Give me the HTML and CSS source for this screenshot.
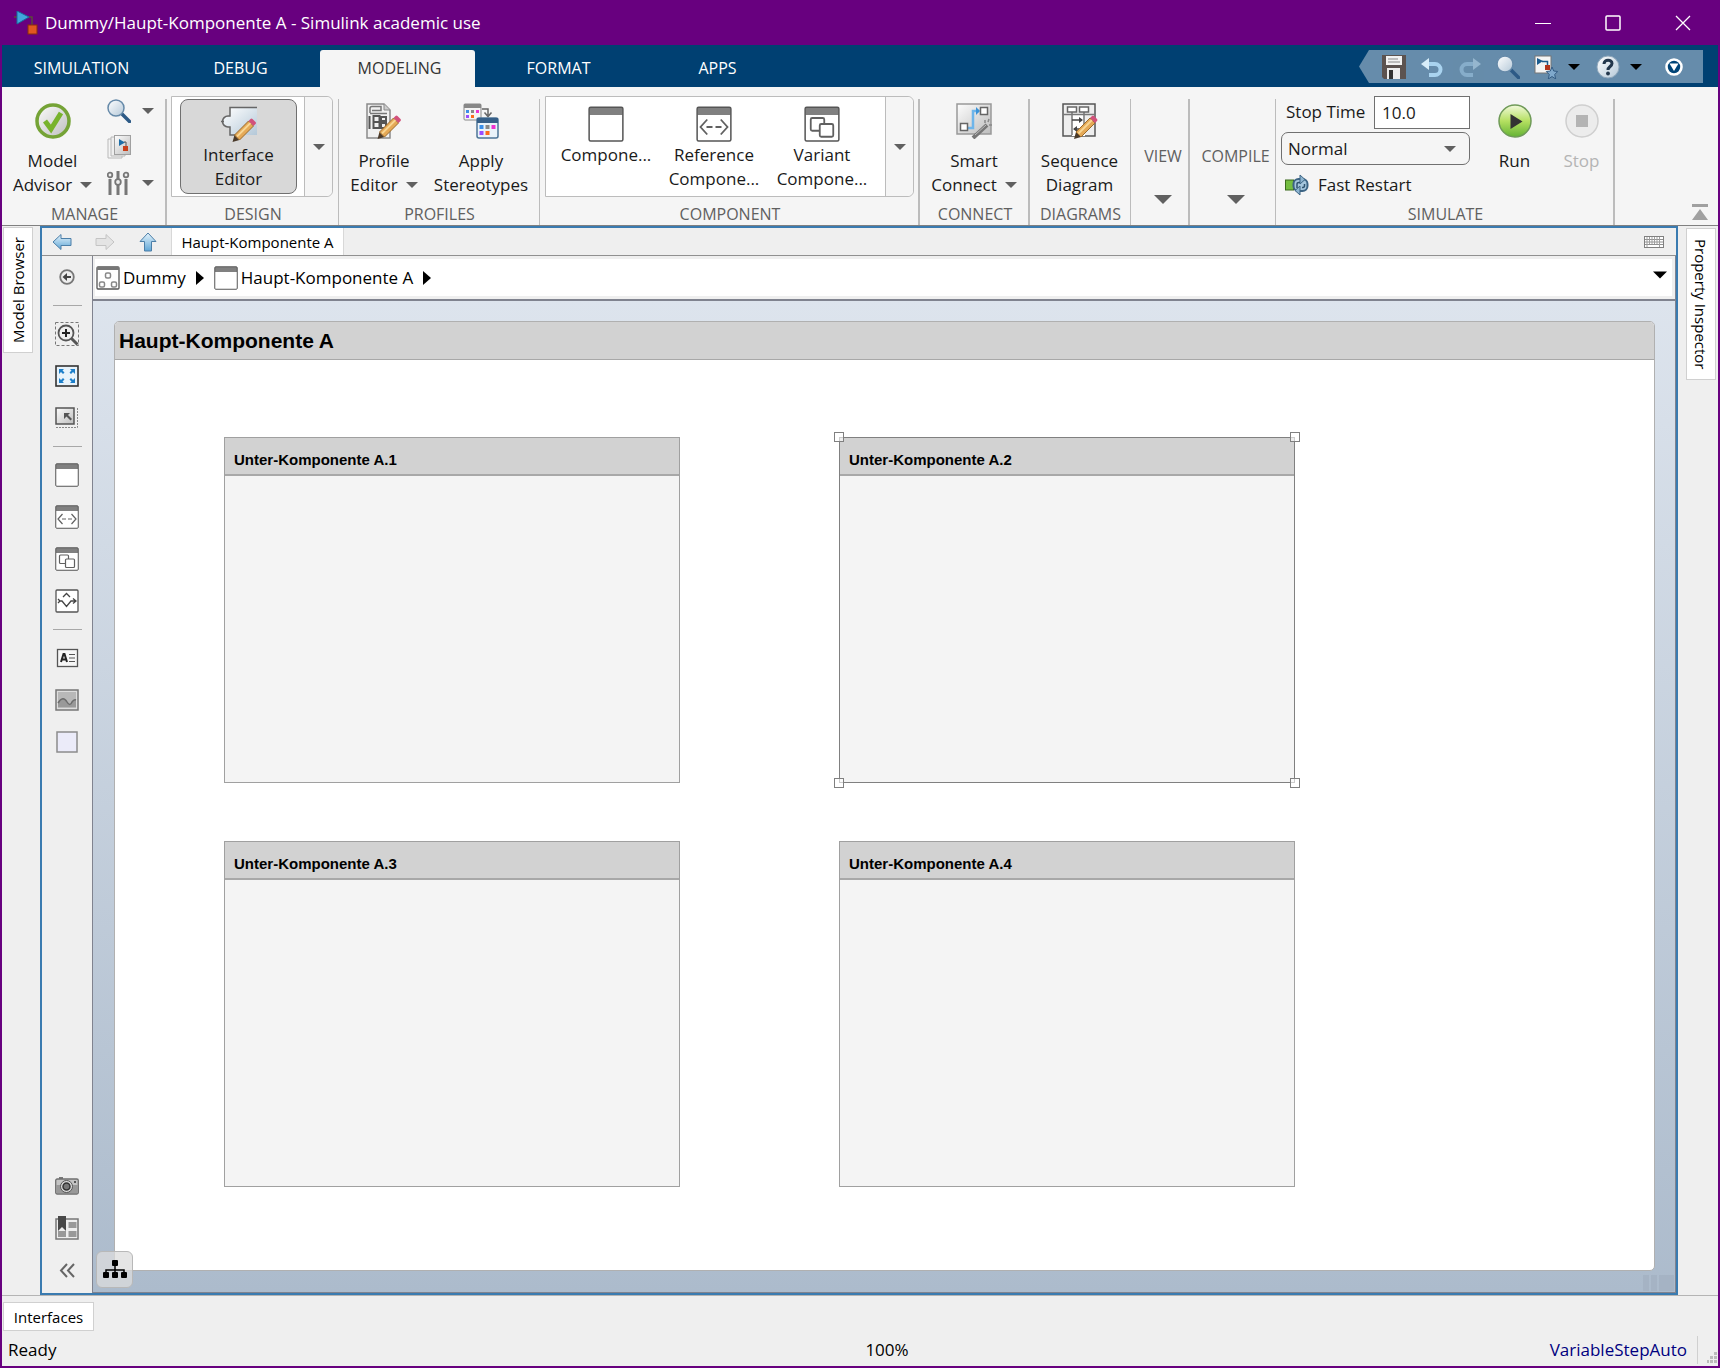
FILE: index.html
```html
<!DOCTYPE html>
<html lang="en">
<head>
<meta charset="utf-8">
<title>Dummy/Haupt-Komponente A - Simulink academic use</title>
<link rel="stylesheet" href="styles.css">
</head>
<body>
<svg class="defs" aria-hidden="true">
  <defs>
    <linearGradient id="gBlue" x1="0" y1="0" x2="0" y2="1"><stop offset="0" stop-color="#e6f4fc"/><stop offset="1" stop-color="#5fa6d6"/></linearGradient>
    <linearGradient id="gGrey" x1="0" y1="0" x2="1" y2="1"><stop offset="0" stop-color="#fdfdfd"/><stop offset="1" stop-color="#bdbdbd"/></linearGradient>
    <linearGradient id="gGreen" x1="0" y1="0" x2="0" y2="1"><stop offset="0" stop-color="#f2f9dc"/><stop offset=".5" stop-color="#b5e061"/><stop offset="1" stop-color="#63b234"/></linearGradient>
    <linearGradient id="gSteel" x1="0" y1="0" x2="1" y2="1"><stop offset="0" stop-color="#ffffff"/><stop offset="1" stop-color="#b4c8d8"/></linearGradient>
    <symbol id="pencil" viewBox="0 0 24 24"><path d="M0 24l2-7 5 5z" fill="#4a3a2a"/><path d="M2 17L16 3l5 5L7 22z" fill="#e5a956" stroke="#9a6a2c"/><path d="M4.500 18.500L18 5" stroke="#f8d694" stroke-width="1.800"/><path d="M16 3l2-2q1-1 2 0l3 3q1 1 0 2l-2 2z" fill="#d2517b"/></symbol>
    <symbol id="comp" viewBox="0 0 24 24"><rect x="1" y="1" width="22" height="22" fill="#fff"/><rect x="1" y="1" width="22" height="5" fill="#808080"/><rect x=".75" y=".75" width="22.500" height="22.500" rx="1" fill="none" stroke="#555"/></symbol>
    <symbol id="ref" viewBox="0 0 24 24"><use href="#comp"/><path d="M7.500 9L3 14l4.500 5M16.500 9l4.500 5-4.500 5M7 14h4M13 14h4" fill="none" stroke="#606060" stroke-width="1.200"/></symbol>
    <symbol id="variant" viewBox="0 0 24 24"><use href="#comp"/><rect x="4.500" y="8" width="9" height="8.500" rx="1" fill="#fff" stroke="#606060" stroke-width="1.200"/><rect x="10.500" y="12" width="9" height="8.500" rx="1" fill="#fff" stroke="#606060" stroke-width="1.200"/></symbol>
    <symbol id="glass" viewBox="0 0 24 24"><path d="M14.500 14.500l8 8" stroke="#2d5a86" stroke-width="3.500" stroke-linecap="round"/><circle cx="9" cy="9" r="8" fill="url(#gSteel)" stroke="#6589a8" stroke-width="1.500"/></symbol>
    <symbol id="arrow" viewBox="0 0 20 18"><path d="M1 9L9 1.500V5.500h10v7H9v4z" fill="url(#gBlue)" stroke="#4c7fa8"/></symbol>
    <symbol id="check" viewBox="0 0 36 36"><circle cx="18" cy="18" r="16" fill="url(#gGrey)" stroke="#75a336" stroke-width="3.500"/><path d="M10 18l6 8L26 10" fill="none" stroke="#78b32c" stroke-width="5"/></symbol>
    <symbol id="caret" viewBox="0 0 12 6"><path d="M0 0h12L6 6z" fill="currentColor"/></symbol>
  </defs>
</svg>

<header class="titlebar">
  <svg class="i24" viewBox="0 0 24 24"><path d="M0 6h18v9" fill="none" stroke="#5b4a3a" stroke-width="1.500"/><path d="M3 0l12 6L3 13z" fill="#41a5dc" stroke="#176a9c"/><rect x="14" y="14" width="9" height="9" fill="#e0571f" stroke="#8a2d0c"/></svg>
  <h1>Dummy/Haupt-Komponente A - Simulink academic use</h1>
  <div class="winbtns">
    <button aria-label="Minimize"><svg class="i16" viewBox="0 0 16 16"><path d="M0 8.500h16" stroke="#fff"/></svg></button>
    <button aria-label="Maximize"><svg class="i16" viewBox="0 0 16 16"><rect x="1" y="1" width="14" height="14" rx="1" fill="none" stroke="#fff" stroke-width="1.500"/></svg></button>
    <button aria-label="Close"><svg class="i16" viewBox="0 0 16 16"><path d="M1 1l14 14M15 1L1 15" stroke="#fff" stroke-width="1.300"/></svg></button>
  </div>
</header>

<nav class="tabs">
  <button>SIMULATION</button><button>DEBUG</button><button class="active">MODELING</button><button>FORMAT</button><button>APPS</button>
  <div class="quick">
    <button aria-label="Save"><svg class="i24" viewBox="0 0 24 24"><path d="M0 0h24v24H2l-2-2z" fill="#5c5350"/><rect x="4" y="1" width="16" height="9" fill="#f2f2f2"/><path d="M6 4h10M6 7h12" stroke="#888"/><rect x="5" y="13" width="13" height="11" fill="#eee"/><rect x="7" y="15" width="4" height="9" fill="#333"/></svg></button>
    <button aria-label="Undo"><svg class="i24" viewBox="0 0 24 24"><path d="M6 9h9a5.500 5.500 0 0 1 0 11H9" fill="none" stroke="#a9d3ef" stroke-width="4"/><path d="M1 9l8-6v12z" fill="#d8edf9"/></svg></button>
    <button class="dim" aria-label="Redo"><svg class="i24" viewBox="0 0 24 24"><path d="M18 9H9a5.500 5.500 0 0 0 0 11h6" fill="none" stroke="#9cc3df" stroke-width="4"/><path d="M23 9l-8-6v12z" fill="#b5d3e7"/></svg></button>
    <button aria-label="Search"><svg class="i24"><use href="#glass"/></svg></button>
    <button class="split fav" aria-label="Favorites"><svg class="i24" viewBox="0 0 24 24"><rect x="1" y="1" width="16" height="17" fill="#f4f4f4" stroke="#777"/><path d="M3 3l6 3-6 4z" fill="#1b5c8e"/><path d="M8 6.500h5.500V11" fill="none" stroke="#1b5c8e" stroke-width="1.500"/><rect x="11" y="10" width="5" height="5" fill="#b3341b"/><path d="M18 12l1.700 4 4 .5-3 3 1 4.500-3.700-2.500-3.700 2.500 1-4.500-3-3 4-.5z" fill="#7fa9cc" stroke="#345c84"/></svg><svg class="caret"><use href="#caret"/></svg></button>
    <button class="split" aria-label="Help"><svg class="i24" viewBox="0 0 24 24"><circle cx="12" cy="12" r="11" fill="url(#gSteel)" stroke="#8fa7bb"/><path d="M8 9c0-5 8-5 8-.5 0 3-4 3-4 6.500" fill="none" stroke="#23374c" stroke-width="3"/><circle cx="12" cy="18.500" r="1.900" fill="#23374c"/></svg><svg class="caret"><use href="#caret"/></svg></button>
    <button aria-label="Toolstrip options"><svg class="i24" viewBox="0 0 24 24"><circle cx="12" cy="12" r="7.500" fill="#004477" stroke="#fff" stroke-width="2.600"/><path d="M7.500 8.500h9L12 16z" fill="#fff"/></svg></button>
  </div>
</nav>

<section class="ribbon">
  <div class="group thick manage">
    <div class="body">
      <button class="big"><svg class="i36"><use href="#check"/></svg><span>Model</span><span class="drop">Advisor <svg class="caret"><use href="#caret"/></svg></span></button>
      <div class="mini">
        <button aria-label="Find"><svg class="i24"><use href="#glass"/></svg><svg class="caret"><use href="#caret"/></svg></button>
        <button aria-label="Compare"><svg class="i24" viewBox="0 0 24 24"><path d="M1 4h14v19H1z" fill="#f4f4f4" stroke="#b8b8b8"/><path d="M4 2h14v19H4z" fill="#eee" stroke="#b8b8b8"/><rect x="7.500" y=".5" width="16" height="19" fill="url(#gGrey)" stroke="#a0a0a0"/><path d="M12 4l6 3.500-6 3.500z" fill="#1d6ea8"/><path d="M17 7h2v5" stroke="#555" fill="none"/><rect x="16" y="11" width="5" height="5" fill="#c8401b"/></svg></button>
        <button aria-label="Settings"><svg class="i24" viewBox="0 0 24 24"><path d="M3 8v16M11 14v10M19 8v16M11 0v8" stroke="#777" stroke-width="3"/><g fill="#eee" stroke="#777" stroke-width="1.800"><circle cx="3" cy="4" r="2.300"/><circle cx="11" cy="11" r="2.800"/><circle cx="19" cy="4" r="2.300"/></g></svg><svg class="caret"><use href="#caret"/></svg></button>
      </div>
    </div>
    <h2>MANAGE</h2>
  </div>
  <div class="group design">
    <div class="body">
      <div class="gallery">
        <button class="item pressed"><svg class="i36" viewBox="0 0 36 36"><path d="M9 2h27v27H9v-9H7a4 4 0 0 1 0-9h2z" fill="url(#gSteel)"/><path d="M36 1.500H9V10H7a5 5 0 0 0 0 11h2v8h10M0 15.500h3" fill="none" stroke="#666" stroke-width="1.500"/><use href="#pencil" x="11" y="12" width="25" height="24"/></svg><span>Interface</span><span>Editor</span></button>
        <button class="more" aria-label="More design tools"><svg class="caret"><use href="#caret"/></svg></button>
      </div>
    </div>
    <h2>DESIGN</h2>
  </div>
  <div class="group profiles">
    <div class="body">
      <button class="big"><svg class="i36" viewBox="0 0 36 36"><path d="M1 1h17l6 6v28H1z" fill="#f0f0f0" stroke="#8a8a8a" stroke-width="1.500"/><path d="M18 1v6h6" fill="#ccc" stroke="#8a8a8a"/><path d="M4 10V5.500q0-2 2-2h9v4H6M4 10.500h17" fill="none" stroke="#777" stroke-width="1.500"/><path d="M3.500 13v13M7.500 13h6v12h-6zM8 19h5M15 14h5v4h-5zM15 20h5v5h-5z" fill="none" stroke="#555" stroke-width="2"/><use href="#pencil" x="11" y="12" width="25" height="24"/></svg><span>Profile</span><span class="drop">Editor <svg class="caret"><use href="#caret"/></svg></span></button>
      <button class="big"><svg class="i36" viewBox="0 0 36 36"><rect x="1" y="1" width="17" height="16" rx="1" fill="#f4f4f4" stroke="#888"/><path d="M1 1h17v4H1z" fill="#888"/><path d="M19 6h6v6M21.500 9.500l3.500 4 3.500-4" fill="none" stroke="#666" stroke-width="1.500"/><path d="M3 7h3v3H3z" fill="#3a8ee8"/><path d="M8 7h3v3H8z" fill="#888"/><path d="M13 7h3v3h-3z" fill="#ee33d0"/><path d="M3 12h3v3H3z" fill="#9a4dff"/><path d="M8 12h3v3H8z" fill="#ff6b1a"/><rect x="14" y="15" width="21" height="20" rx="2" fill="#eaf3fa" stroke="#4d7598" stroke-width="1.500"/><path d="M14 15h21v5H14z" fill="#365f88"/><path d="M16.500 22h4v4h-4z" fill="#3a8ee8"/><path d="M22.500 22h4v4h-4z" fill="#888"/><path d="M28.500 22h4v4h-4z" fill="#ee33d0"/><path d="M16.500 28h4v4h-4z" fill="#9a4dff"/><path d="M22.500 28h4v4h-4z" fill="#ff6b1a"/></svg><span>Apply</span><span>Stereotypes</span></button>
    </div>
    <h2>PROFILES</h2>
  </div>
  <div class="group thick component">
    <div class="body">
      <div class="gallery">
        <button class="item"><svg class="i36"><use href="#comp"/></svg><span>Compone...</span></button>
        <button class="item"><svg class="i36"><use href="#ref"/></svg><span>Reference</span><span>Compone...</span></button>
        <button class="item"><svg class="i36"><use href="#variant"/></svg><span>Variant</span><span>Compone...</span></button>
        <button class="more" aria-label="More components"><svg class="caret"><use href="#caret"/></svg></button>
      </div>
    </div>
    <h2>COMPONENT</h2>
  </div>
  <div class="group thick connect">
    <div class="body">
      <button class="big"><svg class="i36" viewBox="0 0 36 36"><rect x="1" y="1" width="34" height="30" fill="url(#gGrey)" stroke="#999" stroke-width="1.500"/><path d="M12 25h5V8h6" fill="none" stroke="#6db5ea" stroke-width="2.500"/><path d="M20 4l4 4-4 4z" fill="#3b93d8"/><rect x="24.500" y="4.500" width="7" height="7" fill="#fff" stroke="#666" stroke-width="1.500"/><rect x="4.500" y="20.500" width="7" height="7" fill="#fff" stroke="#666" stroke-width="1.500"/><path d="M17 35L31 22" stroke="#777" stroke-width="4"/><path d="M19 32l11-10" stroke="#bbb"/><path d="M29 17v3M33 16l-1 3M33 22h3" stroke="#888" stroke-width="1.500"/></svg><span>Smart</span><span class="drop">Connect <svg class="caret"><use href="#caret"/></svg></span></button>
    </div>
    <h2>CONNECT</h2>
  </div>
  <div class="group diagrams">
    <div class="body">
      <button class="big"><svg class="i36" viewBox="0 0 36 36"><rect x="1" y="1" width="32" height="32" fill="#eee" stroke="#555" stroke-width="1.500"/><rect x="10" y="12" width="13" height="21" fill="#fff"/><path d="M1 11.500h32M10 8v24M22 8v16" stroke="#777" stroke-width="1.500"/><rect x="5.500" y="4" width="9" height="5" fill="#fff" stroke="#666" stroke-width="1.500"/><rect x="17.500" y="4" width="9" height="5" fill="#fff" stroke="#666" stroke-width="1.500"/><path d="M10 17h10M12 26h8" stroke="#444" stroke-width="1.500"/><path d="M17 14l4 3-4 3zM15 23l-4 3 4 3z" fill="#444"/><use href="#pencil" x="12" y="12" width="24" height="24"/></svg><span>Sequence</span><span>Diagram</span></button>
    </div>
    <h2>DIAGRAMS</h2>
  </div>
  <button class="group thick folded view"><span>VIEW</span><svg class="caret"><use href="#caret"/></svg></button>
  <button class="group folded compile"><span>COMPILE</span><svg class="caret"><use href="#caret"/></svg></button>
  <div class="group thick simulate">
    <div class="body">
      <div class="form">
        <div class="field"><label for="stop">Stop Time</label><input id="stop" type="text" value="10.0"></div>
        <div class="pick"><select aria-label="Simulation mode"><option>Normal</option></select><svg class="caret"><use href="#caret"/></svg></div>
        <button class="fast"><svg class="i24" viewBox="0 0 24 24"><rect x=".5" y="7" width="8" height="10" fill="#74bd40" stroke="#3d6b1e"/><rect x="8.500" y="6" width="14" height="12" rx="5" fill="#a5c6dd" stroke="#3c6484" stroke-width="2"/><path d="M15 2l5 4.500-5 4.500zM15 13l-5 4.500 5 4.500z" fill="#8db4d0" stroke="#3c6484"/><path d="M12 15v-4q0-1.500 2-1.500h1M17 14.500h1q1.500 0 1.500-2V11" fill="none" stroke="#2f536f" stroke-width="1.500"/></svg>Fast Restart</button>
      </div>
      <button class="big run"><svg class="i36" viewBox="0 0 36 36"><circle cx="18" cy="18" r="16" fill="url(#gGreen)" stroke="#6f9a58" stroke-width="1.500"/><path d="M13.500 11l12 7.500-12 7.500z" fill="#333"/></svg><span>Run</span></button>
      <button class="big stop" disabled><svg class="i36" viewBox="0 0 36 36"><circle cx="18" cy="18" r="16" fill="#ececec" stroke="#cfcfcf" stroke-width="1.500"/><rect x="12" y="12" width="12" height="12" fill="#b4b4b4"/></svg><span>Stop</span></button>
    </div>
    <h2>SIMULATE</h2>
  </div>
  <button class="collapse" aria-label="Minimize toolstrip"><svg class="i16" viewBox="0 0 16 16"><path d="M0 0h16v3H0zM8 5l8 11H0z" fill="#a0a0a0"/></svg></button>
</section>

<main class="work">
  <aside class="side left"><button>Model Browser</button></aside>
  <section class="editor">
    <div class="navrow">
      <button aria-label="Back"><svg class="nav"><use href="#arrow"/></svg></button>
      <button class="fwd" aria-label="Forward" disabled><svg class="nav" viewBox="0 0 20 18"><path d="M19 9l-8-7.500V5.500H1v7h10v4z" fill="#e4e4e4" stroke="#c4c4c4"/></svg></button>
      <button aria-label="Up"><svg class="nav up" viewBox="0 0 18 20"><path d="M9 1L1 9.500h4.500V19h7V9.500H17z" fill="url(#gBlue)" stroke="#4c7fa8"/></svg></button>
      <button class="doc">Haupt-Komponente A</button>
      <svg class="keys" viewBox="0 0 20 12"><rect x=".5" y=".5" width="19" height="11" fill="#fff" stroke="#808080"/><path d="M1 3.500h18M1 6h18M1 8.500h18" stroke="#909090"/><path d="M3 1v10M5.500 1v7M8 1v7M10.500 1v7M13 1v7M15.500 1v10" stroke="#a0a0a0"/></svg>
    </div>
    <div class="split-row">
      <div class="tools">
        <button aria-label="Hide browser"><svg class="i24" viewBox="0 0 24 24"><circle cx="12" cy="12" r="6.800" fill="#eee" stroke="#777" stroke-width="1.800"/><path d="M7.500 12l4.500-4v3h4v2h-4v3z" fill="#444"/></svg></button>
        <hr>
        <button aria-label="Zoom"><svg class="i24" viewBox="0 0 24 24"><rect x=".5" y=".5" width="23" height="23" fill="none" stroke="#777" stroke-dasharray="3 2"/><path d="M16.500 16.500l6 6" stroke="#555" stroke-width="3"/><circle cx="11" cy="11" r="7.500" fill="#eee" stroke="#555" stroke-width="1.800"/><path d="M7 11h8M11 7v8" stroke="#222" stroke-width="2"/></svg></button>
        <button aria-label="Fit to view"><svg class="i24" viewBox="0 0 24 24"><rect x="1" y="2" width="22" height="20" fill="#e8f3fb" stroke="#333" stroke-width="1.600"/><path d="M4 5h5L7.500 6.500l2 2-1.500 1.500-2-2L4 10zM20 5h-5l1.500 1.500-2 2 1.500 1.500 2-2L20 10zM4 19h5l-1.500-1.500 2-2L8 14l-2 2-2-2zM20 19h-5l1.500-1.500-2-2L16 14l2 2 2-2z" fill="#1c7fca"/></svg></button>
        <button aria-label="Toggle perspectives"><svg class="i24" viewBox="0 0 24 24"><path d="M22.500 2v19.500H1" fill="none" stroke="#888" stroke-dasharray="2 1"/><rect x="1" y="2" width="18" height="16" fill="url(#gGrey)" stroke="#555" stroke-width="1.500"/><path d="M9 7h6l-2 2 4 4-1.500 1.500-4-4L9 13z" fill="#555"/></svg></button>
        <hr>
        <button aria-label="Component"><svg class="i24"><use href="#comp"/></svg></button>
        <button aria-label="Reference component"><svg class="i24"><use href="#ref"/></svg></button>
        <button aria-label="Variant component"><svg class="i24"><use href="#variant"/></svg></button>
        <button aria-label="Adapter"><svg class="i24" viewBox="0 0 24 24"><rect x="1" y="1" width="22" height="22" rx="1" fill="#fff" stroke="#555" stroke-width="1.300"/><path d="M8 8l3.500-3.500L15 8M3 10l2 2-2 2M4 12h3l4.500 5.500L16 12h4M18 9.500l3 2.500-3 2.500" fill="none" stroke="#444" stroke-width="1.300"/></svg></button>
        <hr>
        <button aria-label="Annotation"><svg class="i24" viewBox="0 0 24 24"><rect x="2.500" y="3.500" width="20" height="17" fill="#f6f6f6" stroke="#555" stroke-width="1.300"/><path d="M6 16l2.500-8h1L12 16M7 13.500h4" fill="none" stroke="#222" stroke-width="2"/><path d="M14 8.500h6M14 12h6M14 15.500h6" stroke="#555" stroke-width="1.200"/></svg></button>
        <button aria-label="Image"><svg class="i24" viewBox="0 0 24 24"><rect x="1" y="2" width="22" height="20" fill="#ddd" stroke="#777" stroke-width="1.500"/><rect x="3" y="4" width="18" height="16" fill="#b8b8b8"/><path d="M3 15q5-8 9-1 3 5 5 0 2-3 4-2v7H3z" fill="#999"/><path d="M3 15q5-8 9-1 3 5 5 0 2-3 4-2" fill="none" stroke="#6c6c6c" stroke-width="1.500"/></svg></button>
        <button aria-label="Area"><svg class="i24" viewBox="0 0 24 24"><rect x="2" y="2" width="20" height="20" fill="#ebebf9" stroke="#8c8c8c" stroke-width="1.500"/></svg></button>
        <div class="gap"></div>
        <button aria-label="Screenshot"><svg class="i24" viewBox="0 0 24 24"><path d="M4 3h4v2H4z" fill="#777"/><rect x=".7" y="5" width="22.600" height="15" rx="1.500" fill="#c4c4c4" stroke="#707070" stroke-width="1.300"/><path d="M1 11h22v8H1z" fill="#999"/><circle cx="11.500" cy="12.500" r="6" fill="#ddd" stroke="#555"/><circle cx="11.500" cy="12.500" r="3.500" fill="#777" stroke="#333" stroke-width="1.500"/><path d="M19 8h2" stroke="#333" stroke-width="1.500"/></svg></button>
        <button aria-label="Viewmarks"><svg class="i24" viewBox="0 0 24 24"><rect x="1" y="3" width="22" height="20" fill="#eee" stroke="#777" stroke-width="1.500"/><path d="M13.500 6h8v6h-8zM13.500 15h8v6h-8zM3 15h8v6H3z" fill="#999"/><path d="M3 0h8v15l-4-4-4 4z" fill="#484848"/></svg></button>
        <button aria-label="Collapse palette"><svg class="i24" viewBox="0 0 24 24"><path d="M12 6l-6 6.500 6 6.500M19 6l-6 6.500 6 6.500" fill="none" stroke="#666" stroke-width="2"/></svg></button>
      </div>
      <div class="stage">
        <div class="crumbs">
          <a href="#"><svg class="i24" viewBox="0 0 24 24"><rect x="1" y="1" width="22" height="22" rx="1" fill="#fff" stroke="#555" stroke-width="1.300"/><path d="M1 1h22v3H1z" fill="#777"/><g fill="#fff" stroke="#888" stroke-width="1.500"><rect x="9.500" y="7" width="5" height="5" rx="1.500"/><rect x="3.500" y="16" width="5" height="5" rx="1.500"/><rect x="15.500" y="16" width="5" height="5" rx="1.500"/></g></svg>Dummy</a>
          <svg class="tri" viewBox="0 0 8 14"><path d="M0 0l8 7-8 7z"/></svg>
          <a href="#"><svg class="i24"><use href="#comp"/></svg>Haupt-Komponente A</a>
          <svg class="tri" viewBox="0 0 8 14"><path d="M0 0l8 7-8 7z"/></svg>
          <button aria-label="Path history"><svg class="caret wide"><use href="#caret"/></svg></button>
        </div>
        <div class="canvas">
          <article class="model">
            <h2>Haupt-Komponente A</h2>
            <div class="plane">
              <section class="block a1"><h3>Unter-Komponente A.1</h3></section>
              <section class="block a2 selected"><h3>Unter-Komponente A.2</h3><i class="tl"></i><i class="tr"></i><i class="bl"></i><i class="br"></i></section>
              <section class="block a3"><h3>Unter-Komponente A.3</h3></section>
              <section class="block a4"><h3>Unter-Komponente A.4</h3></section>
            </div>
          </article>
          <button class="tree" aria-label="Model hierarchy"><svg class="i24" viewBox="0 0 24 24"><path d="M12 6v12M3 17v-5h18v5" fill="none" stroke="#000" stroke-width="1.500"/><rect x="9" y="2" width="6" height="6" rx="1"/><rect x="0" y="14" width="6" height="6" rx="1"/><rect x="9" y="14" width="6" height="6" rx="1"/><rect x="18" y="14" width="6" height="6" rx="1"/></svg></button>
          <div class="grips"><i></i><i></i><i></i></div>
        </div>
      </div>
    </div>
  </section>
  <aside class="side right"><button>Property Inspector</button></aside>
</main>

<div class="dock"><button>Interfaces</button></div>
<footer class="status">
  <span>Ready</span><span class="zoom">100%</span><a href="#">VariableStepAuto</a>
  <svg class="resize" viewBox="0 0 10 11"><path d="M7 0h3v3H7zM3 4h3v3H3zM7 4h3v3H7zM0 8h2v3H0zM3 8h3v3H3zM7 8h3v3H7z" fill="#bbb"/></svg>
</footer>
</body>
</html>
```
FILE: styles.css
```css
* { box-sizing: border-box; }

body {
  margin: 0;
  min-height: 100vh;
  display: flex;
  flex-direction: column;
  border: 2px solid #68007f;
  border-top: 0;
  background: #efefef;
  color: #1a1a1a;
  font: 17px/24px "Open Sans", "Noto Sans", sans-serif;
}

button, input, select {
  margin: 0;
  padding: 0;
  border: 0;
  background: none;
  color: inherit;
  font: inherit;
}

svg { display: block; flex: none; }
h1, h2, h3 { margin: 0; font: inherit; }
a { color: inherit; text-decoration: none; }
.defs { position: absolute; width: 0; height: 0; }
.i16 { width: 16px; height: 16px; }
.i24 { width: 24px; height: 24px; }
.i36 { width: 36px; height: 36px; }
.caret { width: 12px; height: 6px; color: #606060; }

/* Title bar */
.titlebar {
  display: flex;
  align-items: center;
  gap: 7px;
  height: 45px;
  padding-left: 12px;
  background: #68007f;
  color: #fff;
}
.winbtns { display: flex; margin-left: auto; }
.winbtns button { width: 70px; display: flex; justify-content: center; }

/* Toolstrip tabs */
.tabs {
  display: flex;
  align-items: flex-end;
  height: 42px;
  padding-right: 15px;
  background: #004072;
}
.tabs > button {
  width: 155px;
  height: 37px;
  margin-right: 4px;
  padding: 0 0 2px 4px;
  color: #fff;
  font-size: 16px;
}
.tabs > .active {
  border-radius: 3px 3px 0 0;
  background: #f5f5f5;
  color: #333;
}
.quick {
  display: flex;
  align-items: center;
  gap: 14px;
  height: 33px;
  margin: 0 0 4px auto;
  padding: 0 17px 0 23px;
  background: #668cab;
  clip-path: polygon(10px 0, 100% 0, 100% 100%, 10px 100%, 0 50%);
}
.quick .dim { opacity: .6; }
.quick .split { display: flex; align-items: center; gap: 10px; margin-right: 6px; }
.quick .fav { margin-right: 2px; }
.quick .caret { color: #000; }

/* Ribbon */
.ribbon {
  display: flex;
  height: 139px;
  border-bottom: 1px solid #808080;
  background: #f5f5f5;
}
.group {
  display: flex;
  flex: none;
  flex-direction: column;
  background: linear-gradient(#bcbcbc, #bcbcbc) right bottom / 1px calc(100% - 12px) no-repeat;
}
.group.thick { background-size: 2px calc(100% - 12px); }
.group .body { display: flex; height: 117px; padding-top: 9px; }
.group h2 {
  font-size: 16px;
  line-height: 20px;
  text-align: center;
  color: #606060;
}
.manage { width: 165px; }
.design { width: 172px; }
.profiles { width: 201px; }
.component { width: 380px; }
.connect { width: 110px; }
.diagrams { width: 101px; }
.view { width: 59px; }
.compile { width: 86px; }
.simulate { width: 339px; }

.big {
  display: flex;
  flex-direction: column;
  align-items: center;
  padding-top: 7px;
}
.big svg.i36 { margin-bottom: 10px; }
.drop { display: flex; align-items: center; gap: 8px; }
.manage .big { width: 101px; }
.mini { display: flex; flex-direction: column; gap: 12px; padding-top: 3px; }
.mini button { display: flex; align-items: center; gap: 11px; padding-left: 4px; }

.gallery {
  display: flex;
  height: 101px;
  margin-left: 4px;
  border: 1px solid #bcbcbc;
  border-radius: 0 6px 6px 0;
  background: #fff;
}
.item {
  display: flex;
  flex-direction: column;
  align-items: center;
  width: 108px;
  padding-top: 9px;
}
.item svg { margin-bottom: 1px; }
.pressed {
  width: 117px;
  height: 95px;
  margin: 2px 7px 0 8px;
  padding-top: 6px;
  border: 1px solid #707070;
  border-radius: 8px;
  background: #d8d8d8;
}
.more {
  display: flex;
  align-items: center;
  justify-content: center;
  width: 28px;
  border-left: 1px solid #bcbcbc;
  border-radius: 0 6px 6px 0;
  background: #f5f5f5;
}
.component .gallery { margin-left: 5px; }
.component .item:first-child { margin-left: 6px; }
.component .item:nth-child(3) { margin-right: 9px; }
.profiles .big:first-child { width: 90px; }
.profiles .big + .big { width: 104px; }
.connect .big { width: 108px; }
.diagrams .big { width: 99px; }

.folded {
  align-items: center;
  justify-content: flex-end;
  gap: 27px;
  padding: 0 0 21px 5px;
  color: #606060;
  font-size: 16px;
}
.folded .caret { width: 18px; height: 9px; }

.simulate .form { flex: none; width: 205px; padding-left: 5px; }
.simulate .form > div { margin-right: 11px; }
.field { display: flex; align-items: center; justify-content: space-between; height: 32px; padding-left: 5px; }
.field label { white-space: nowrap; }
.field input {
  width: 96px;
  height: 33px;
  padding-left: 7px;
  border: 1px solid #707070;
  background: #fff;
}
.pick { display: grid; align-items: center; margin: 4px 0; }
.pick > * { grid-area: 1 / 1; }
.pick .caret { justify-self: end; margin-right: 14px; }
.pick select {
  appearance: none;
  height: 33px;
  padding-left: 6px;
  border: 1px solid #707070;
  border-radius: 7px;
}
.fast { display: flex; align-items: center; gap: 9px; height: 32px; padding-left: 4px; }
.run, .stop { width: 67px; }
.stop { color: #b4b4b4; }
.collapse { align-self: flex-end; margin: 0 10px 5px auto; }

/* Work area */
.work { flex: 1; display: flex; border-bottom: 1px solid #b4b4b4; }
.side { width: 38px; padding: 1px; font-size: 15px; }
.side button {
  width: 30px;
  border: 1px solid #d0d0d0;
  background: #fff;
  color: #000;
  writing-mode: vertical-rl;
}
.side.left button { height: 126px; transform: rotate(180deg); }
.side.right { width: 40px; padding: 2px 0 0 8px; }
.side.right button { height: 152px; }

.editor {
  flex: 1;
  display: flex;
  flex-direction: column;
  border: 2px solid #3a7bb0;
}
.navrow {
  display: flex;
  align-items: center;
  height: 28px;
  border-bottom: 1px solid #909090;
}
.nav { width: 20px; height: 18px; margin: auto; }
.navrow > button:not(.doc) { width: 40px; height: 20px; margin-right: 3px; }
.nav.up { width: 18px; height: 20px; }
.navrow .doc {
  align-self: stretch;
  width: 173px;
  border: 1px solid #d8d8d8;
  border-width: 0 1px;
  background: #fff;
  color: #000;
  font-size: 15px;
}
.keys { width: 20px; height: 12px; margin: 0 12px 0 auto; }

.split-row { flex: 1; display: flex; }
.tools {
  display: flex;
  flex-direction: column;
  align-items: center;
  gap: 18px;
  width: 50px;
  padding: 9px 0 11px;
}
.tools hr {
  width: 29px;
  height: 1px;
  margin: -2px 0;
  border: 0;
  background: #a8a8a8;
}
.tools .gap { flex: 1; }

.stage {
  flex: 1;
  display: flex;
  flex-direction: column;
  border: 1px solid #80838f;
  border-width: 0 1px 1px;
}
.crumbs {
  display: flex;
  align-items: center;
  gap: 10px;
  height: 43px;
  border: 3px solid #efefef;
  border-left-width: 2px;
  background: #fff;
  color: #000;
}
.crumbs a { display: flex; align-items: center; gap: 3px; }
.crumbs a:first-child { margin-left: 1px; }
.tri { width: 8px; height: 14px; }
.crumbs button { margin: 0 5px 6px auto; }
.caret.wide { width: 14px; height: 8px; color: #000; }

.canvas {
  position: relative;
  flex: 1;
  display: flex;
  padding: 20px 20px 21px 21px;
  border-top: 2px solid #80838f;
  background: linear-gradient(#dde4ed, #acbbcc);
}
.model {
  flex: 1;
  display: flex;
  flex-direction: column;
  border: 1px solid #b0b0b0;
  border-radius: 5px;
  overflow: hidden;
  background: #fff;
  color: #000;
  font-family: "Liberation Sans", sans-serif;
}
.model h2 {
  height: 38px;
  padding-left: 4px;
  border-bottom: 1px solid #a8a8a8;
  background: #d2d2d2;
  font-size: 21px;
  font-weight: bold;
  line-height: 37px;
}
.plane { position: relative; flex: 1; }
.block {
  position: absolute;
  width: 456px;
  height: 346px;
  border: 1px solid #a0a0a0;
  background: #f4f4f4;
}
.block h3 {
  height: 38px;
  padding: 4px 0 0 9px;
  border-bottom: 2px solid #a8a8a8;
  background: #d2d2d2;
  font-size: 15px;
  font-weight: bold;
  line-height: 36px;
}
.a1 { left: 109px; top: 77px; }
.a2 { left: 724px; top: 77px; }
.a3 { left: 109px; top: 481px; }
.a4 { left: 724px; top: 481px; }
.selected { border-color: #808080; }
.selected i {
  position: absolute;
  width: 10px;
  height: 10px;
  border: 1px solid #808080;
  background: rgba(255, 255, 255, .6);
}
.tl { left: -6px; top: -6px; }
.tr { right: -6px; top: -6px; }
.bl { left: -6px; bottom: -6px; }
.br { right: -6px; bottom: -6px; }

.tree {
  position: absolute;
  left: 3px;
  bottom: 4px;
  display: grid;
  place-items: center;
  width: 37px;
  height: 37px;
  border: 1px solid #b8b8b8;
  border-radius: 6px;
  background: rgba(220, 220, 220, .75);
}
.grips { position: absolute; right: 1px; bottom: 1px; display: flex; gap: 2px; }
.grips i { width: 6px; height: 16px; background: #a5b3c4; }
.grips i:last-child { width: 15px; }

/* Bottom bars */
.dock { display: flex; padding: 6px 1px 4px; font-size: 15px; }
.dock button {
  width: 91px;
  height: 29px;
  border: 1px solid #d0d0d0;
  background: #fff;
  color: #000;
}
.status {
  display: grid;
  grid-template-columns: 1fr auto 1fr 22px;
  align-items: center;
  height: 31px;
  padding: 0 1px 1px 6px;
  background: linear-gradient(#d0d0d0, #d0d0d0) right 20px top 1px / 1px 28px no-repeat;
  color: #000;
}
.status .zoom { padding-left: 71px; }
.status a { justify-self: end; padding-right: 8px; color: #000080; }
.resize { place-self: end; width: 10px; height: 11px; margin-bottom: 2px; }
```
